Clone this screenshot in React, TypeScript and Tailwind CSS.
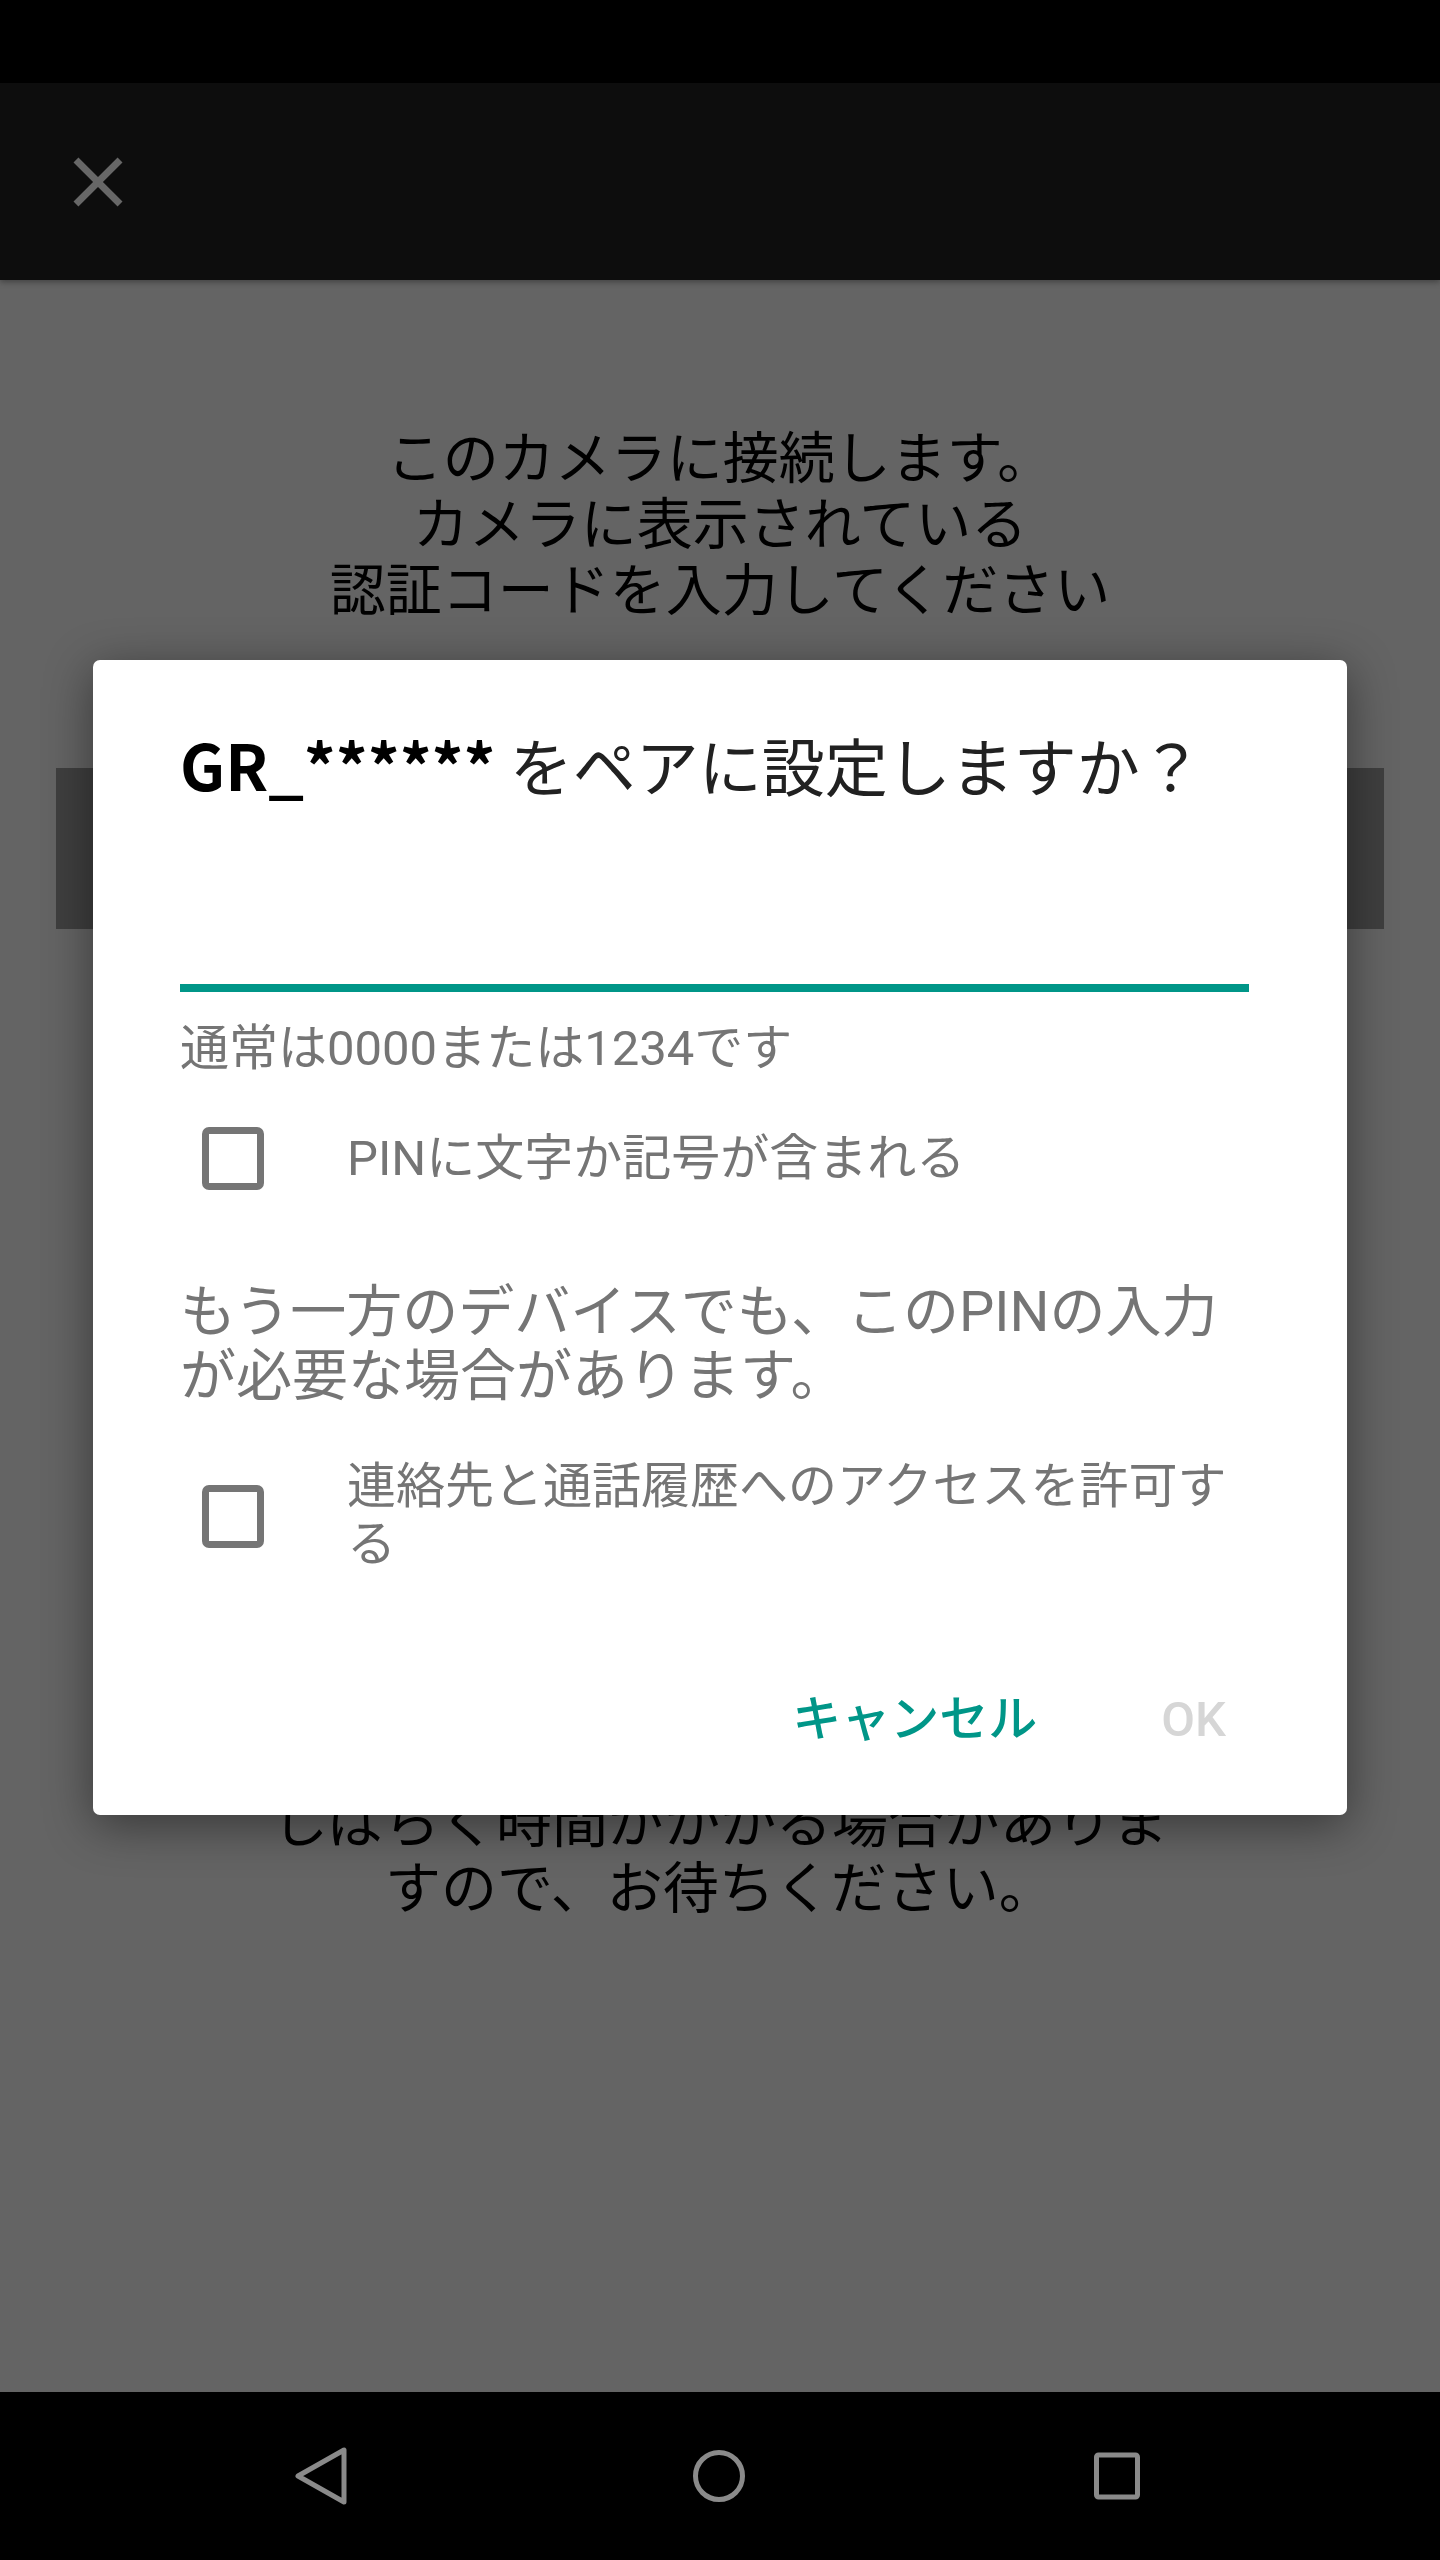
import React from "react";

function Checkbox() {
  return (
    <div className="ml-[22px] w-[62px] h-[63px] shrink-0 rounded-[7px] border-[7px] border-[#757575]" />
  );
}

export default function App() {
  return (
    <div className="relative w-[1440px] h-[2560px] flex flex-col bg-[#646464] font-['Roboto','Noto_Sans_CJK_JP',sans-serif] overflow-hidden">
      {/* status bar */}
      <div className="h-[83px] bg-black shrink-0" />
      {/* toolbar */}
      <div className="h-[197px] bg-[#0d0d0d] shrink-0 flex items-center pl-[56px] shadow-[0_2px_6px_rgba(0,0,0,0.35)] relative z-10">
        <svg width="84" height="84" viewBox="0 0 24 24" fill="#676767">
          <path d="M19 6.41L17.59 5 12 10.59 6.41 5 5 6.41 10.59 12 5 17.59 6.41 19 12 13.41 17.59 19 19 17.59 13.41 12z" />
        </svg>
      </div>
      {/* background content */}
      <div className="flex-1 flex flex-col">
        <div className="mt-[146px] text-center text-[56px] leading-[66px] text-black">
          このカメラに接続します。
          <br />
          カメラに表示されている
          <br />
          認証コードを入力してください
        </div>
        <div className="mt-[144px] mx-[56px] h-[161px] bg-[#3f3f3f]" />
        <div className="mt-[861px] text-center text-[56px] leading-[66px] text-black">
          しばらく時間がかかる場合がありま
          <br />
          すので、お待ちください。
        </div>
      </div>
      {/* nav bar */}
      <div className="h-[168px] bg-black shrink-0 flex items-center pl-[271px] gap-[298px]">
        <div className="w-[100px] h-[100px] flex items-center justify-center">
          <svg width="60" height="64" viewBox="0 0 60 64">
            <path d="M7 32 L53 6 L53 58 Z" fill="none" stroke="#8a8a8a" strokeWidth="5" strokeLinejoin="round" />
          </svg>
        </div>
        <div className="w-[100px] h-[100px] flex items-center justify-center">
          <svg width="60" height="60" viewBox="0 0 60 60">
            <circle cx="30" cy="30" r="23.5" fill="none" stroke="#8a8a8a" strokeWidth="5" />
          </svg>
        </div>
        <div className="w-[100px] h-[100px] flex items-center justify-center">
          <svg width="60" height="60" viewBox="0 0 60 60">
            <rect x="9.5" y="9" width="41" height="42" rx="2" fill="none" stroke="#8a8a8a" strokeWidth="5" />
          </svg>
        </div>
      </div>

      {/* dialog */}
      <div className="absolute left-[93px] top-[660px] w-[1254px] bg-white rounded-[7px] shadow-[0_10px_48px_rgba(0,0,0,0.45)] flex flex-col pt-[63px] pb-[67px]">
        <div className="pl-[87px] pr-[98px] flex flex-col">
          <div className="text-[63px] leading-[82px] whitespace-nowrap">
            <span className="font-['Noto_Sans_CJK_JP',sans-serif] font-bold text-black">GR_******</span>
            <span className="font-['Noto_Sans_CJK_JP',sans-serif] text-[#212121]"> をペアに設定しますか？</span>
          </div>
          <div className="mt-[173px] h-[8px] bg-[#009688]" />
          <div className="mt-[27px] text-[49px] leading-[60px] text-[#757575]">通常は0000または1234です</div>
          <div className="mt-[48px] flex items-center">
            <Checkbox />
            <div className="ml-[83px] flex-1 text-[49px] leading-[57px] text-[#757575]">PINに文字か記号が含まれる</div>
          </div>
          <div className="mt-[90px] text-[56px] leading-[64px] text-[#757575]">
            もう一方のデバイスでも、このPINの入力が必要な場合があります。
          </div>
          <div className="mt-[50px] flex items-center">
            <Checkbox />
            <div className="ml-[83px] flex-1 text-[49px] leading-[58px] text-[#757575]">連絡先と通話履歴へのアクセスを許可する</div>
          </div>
        </div>
        <div className="mt-[117px] flex justify-end items-center pr-[121px] gap-[124px]">
          <div className="text-[49px] leading-[57px] font-medium text-[#009688]">キャンセル</div>
          <div className="text-[49px] leading-[57px] font-medium text-[#d6d6d6]">OK</div>
        </div>
      </div>
    </div>
  );
}
